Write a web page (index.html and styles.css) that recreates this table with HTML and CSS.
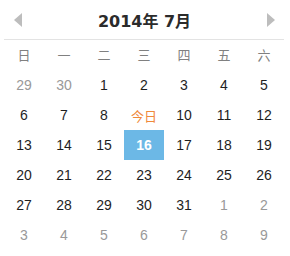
FILE: index.html
```html
<!DOCTYPE html>
<html lang="zh">
<head>
<meta charset="utf-8">
<link rel="stylesheet" href="styles.css">
</head>
<body>
<div class="cal">
  <div class="cal-head">
    <span class="arrow arrow-prev"></span>
    <span class="title">2014年 7月</span>
    <span class="arrow arrow-next"></span>
  </div>
  <div class="grid week">
    <span>日</span><span>一</span><span>二</span><span>三</span><span>四</span><span>五</span><span>六</span>
  </div>
  <div class="grid days">
    <span class="muted">29</span><span class="muted">30</span><span>1</span><span>2</span><span>3</span><span>4</span><span>5</span>
    <span>6</span><span>7</span><span>8</span><span class="today">今日</span><span>10</span><span>11</span><span>12</span>
    <span>13</span><span>14</span><span>15</span><span class="selected">16</span><span>17</span><span>18</span><span>19</span>
    <span>20</span><span>21</span><span>22</span><span>23</span><span>24</span><span>25</span><span>26</span>
    <span>27</span><span>28</span><span>29</span><span>30</span><span>31</span><span class="muted">1</span><span class="muted">2</span>
    <span class="muted">3</span><span class="muted">4</span><span class="muted">5</span><span class="muted">6</span><span class="muted">7</span><span class="muted">8</span><span class="muted">9</span>
  </div>
</div>
</body>
</html>
```
FILE: styles.css
```css
html, body {
  margin: 0;
  padding: 0;
  background: #fff;
}
.cal {
  width: 290px;
  padding: 0 6px 0 4px;
  box-sizing: border-box;
  font-family: "Liberation Sans", "Noto Sans CJK SC", sans-serif;
  color: #222;
}
.cal-head {
  height: 39px;
  border-bottom: 1px solid #e3e3e3;
  display: flex;
  align-items: center;
  justify-content: space-between;
  padding: 0 9px 0 10px;
}
.title {
  font-family: "DejaVu Sans", "Noto Sans CJK SC", sans-serif;
  font-size: 16px;
  font-weight: bold;
  color: #2b2b2b;
  padding-top: 1px;
}
.arrow {
  width: 0;
  height: 0;
  border-top: 7px solid transparent;
  border-bottom: 7px solid transparent;
}
.arrow-prev {
  border-right: 8px solid #bdbdbd;
}
.arrow-next {
  border-left: 8px solid #bdbdbd;
}
.grid {
  display: grid;
  grid-template-columns: repeat(7, 40px);
}
.grid span {
  display: flex;
  align-items: center;
  justify-content: center;
}
.week span {
  height: 29px;
  padding-bottom: 1px;
  font-size: 13px;
  color: #808080;
}
.days span {
  height: 30px;
  font-size: 14px;
  color: #1e1e1e;
}
.days .muted {
  color: #999;
}
.days .today {
  color: #f0893a;
  font-size: 13px;
}
.days .selected {
  background: #6cb8e6;
  color: #fff;
  font-weight: bold;
}
```
